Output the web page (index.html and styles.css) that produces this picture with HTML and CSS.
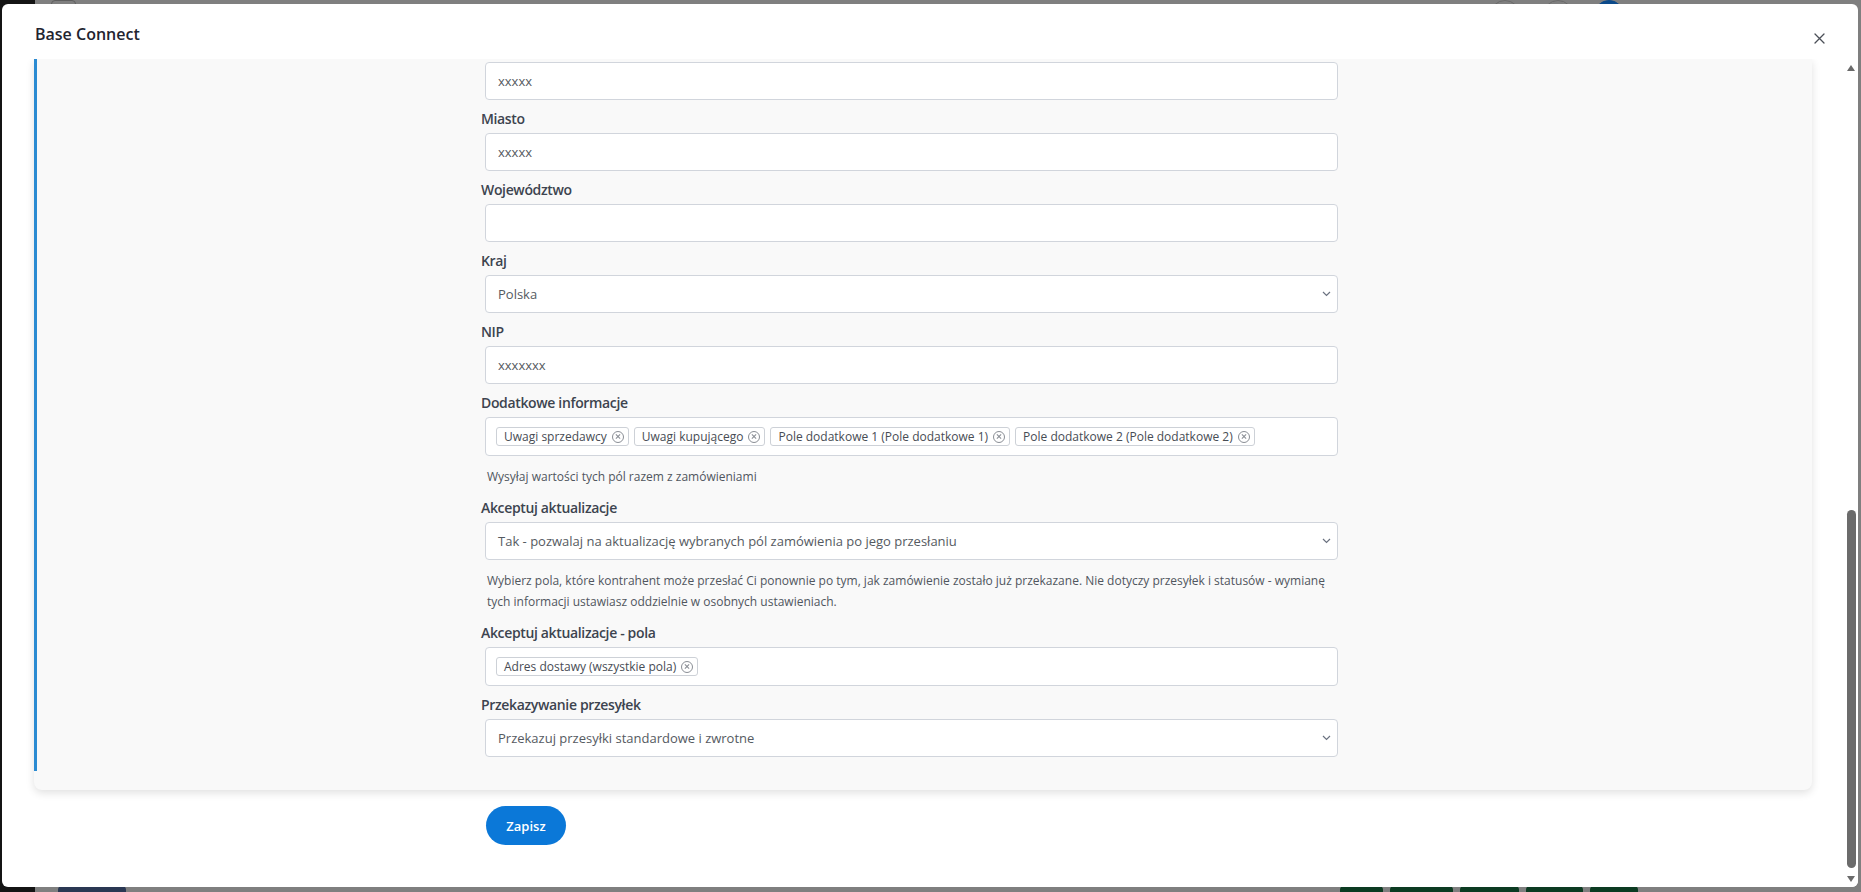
FILE: index.html
```html
<!DOCTYPE html>
<html lang="pl">
<head>
    <meta charset="UTF-8">
    <meta name="viewport" content="width=device-width, initial-scale=1.0">
    <title>Base Connect</title>
    <link rel="stylesheet" href="styles.css">
</head>
<body>
    <!-- STRONA POD NAKŁADKĄ -->
    <div class="pod-spodem">
        <div class="pasek-boczny"></div>
        <span class="ikona-kwadrat"></span>
        <span class="kolko kolko-1"></span>
        <span class="kolko kolko-2"></span>
        <span class="kolko kolko-3"></span>
        <span class="klocek klocek-granat"></span>
        <span class="klocek klocek-zielony z1"></span>
        <span class="klocek klocek-zielony z2"></span>
        <span class="klocek klocek-zielony z3"></span>
        <span class="klocek klocek-zielony z4"></span>
        <span class="klocek klocek-zielony z5"></span>
    </div>

    <!-- OKNO MODALNE -->
    <div class="modal">
        <div class="modal-naglowek">
            <h1>Base Connect</h1>
            <button class="zamknij" aria-label="Zamknij">
                <svg width="11" height="11" viewBox="0 0 11 11">
                    <path d="M1 1L10 10M10 1L1 10" stroke="#4b4f57" stroke-width="1.3" stroke-linecap="round"/>
                </svg>
            </button>
        </div>

        <div class="modal-cialo">
            <div class="tresc">
                <div class="panel">
                    <div class="sekcja">
                        <div class="formularz">
                            <div class="pole">
                                <input class="kontrolka" type="text" value="xxxxx">
                            </div>

                            <div class="pole">
                                <label>Miasto</label>
                                <input class="kontrolka" type="text" value="xxxxx">
                            </div>

                            <div class="pole">
                                <label>Województwo</label>
                                <input class="kontrolka" type="text" value="">
                            </div>

                            <div class="pole">
                                <label>Kraj</label>
                                <div class="wybor">
                                    <div class="kontrolka">Polska</div>
                                    <svg class="strzalka" width="9" height="6" viewBox="0 0 9 6"><path d="M1 1l3.5 3.5L8 1" fill="none" stroke="#6b7280" stroke-width="1.2"/></svg>
                                </div>
                            </div>

                            <div class="pole">
                                <label>NIP</label>
                                <input class="kontrolka" type="text" value="xxxxxxx">
                            </div>

                            <div class="pole z-pomoca">
                                <label>Dodatkowe informacje</label>
                                <div class="kontrolka multi">
                                    <span class="tag">Uwagi sprzedawcy<i class="usun"></i></span>
                                    <span class="tag">Uwagi kupującego<i class="usun"></i></span>
                                    <span class="tag">Pole dodatkowe 1 (Pole dodatkowe 1)<i class="usun"></i></span>
                                    <span class="tag">Pole dodatkowe 2 (Pole dodatkowe 2)<i class="usun"></i></span>
                                </div>
                                <p class="pomoc">Wysyłaj wartości tych pól razem z zamówieniami</p>
                            </div>

                            <div class="pole z-pomoca">
                                <label>Akceptuj aktualizacje</label>
                                <div class="wybor">
                                    <div class="kontrolka">Tak - pozwalaj na aktualizację wybranych pól zamówienia po jego przesłaniu</div>
                                    <svg class="strzalka" width="9" height="6" viewBox="0 0 9 6"><path d="M1 1l3.5 3.5L8 1" fill="none" stroke="#6b7280" stroke-width="1.2"/></svg>
                                </div>
                                <p class="pomoc">Wybierz pola, które kontrahent może przesłać Ci ponownie po tym, jak zamówienie zostało już przekazane. Nie dotyczy przesyłek i statusów - wymianę tych informacji ustawiasz oddzielnie w osobnych ustawieniach.</p>
                            </div>

                            <div class="pole">
                                <label>Akceptuj aktualizacje - pola</label>
                                <div class="kontrolka multi">
                                    <span class="tag">Adres dostawy (wszystkie pola)<i class="usun"></i></span>
                                </div>
                            </div>

                            <div class="pole">
                                <label>Przekazywanie przesyłek</label>
                                <div class="wybor">
                                    <div class="kontrolka">Przekazuj przesyłki standardowe i zwrotne</div>
                                    <svg class="strzalka" width="9" height="6" viewBox="0 0 9 6"><path d="M1 1l3.5 3.5L8 1" fill="none" stroke="#6b7280" stroke-width="1.2"/></svg>
                                </div>
                            </div>
                        </div>
                    </div>
                </div>

                <div class="akcje">
                    <button class="btn-zapisz">Zapisz</button>
                </div>
            </div>

            <!-- pasek przewijania -->
            <div class="suwak">
                <div class="suwak-przycisk"><span class="trojkat-gora"></span></div>
                <div class="suwak-tor"><div class="suwak-uchwyt"></div></div>
                <div class="suwak-przycisk"><span class="trojkat-dol"></span></div>
            </div>
        </div>
    </div>
</body>
</html>
```

FILE: styles.css
```css
/* [1] OGÓLNE */
* {
    box-sizing: border-box;
}

body {
    margin: 0;
    height: 892px;
    padding: 4px 3px 0 2px;
    background-color: #7f7f7f;
    font-family: "Open Sans", "Liberation Sans", sans-serif;
    position: relative;
    overflow: hidden;
}

/* [2] STRONA POD NAKŁADKĄ */
.pod-spodem {
    position: absolute;
    inset: 0;
    z-index: 0;
}

.pasek-boczny {
    position: absolute;
    left: 0;
    top: 0;
    bottom: 0;
    width: 35px;
    background-color: #141414;
}

.ikona-kwadrat {
    position: absolute;
    left: 51px;
    top: 0;
    width: 25px;
    height: 20px;
    border: 1px solid #5e5e5e;
    border-radius: 4px;
}

.kolko {
    position: absolute;
    top: 0;
    width: 30px;
    height: 30px;
    border-radius: 50%;
    border: 1px solid #6a6a6a;
}

.kolko-1 { left: 1490px; }
.kolko-2 { left: 1543px; }
.kolko-3 { left: 1594px; background-color: #0c4a8a; border-color: #0c4a8a; }

.klocek {
    position: absolute;
    bottom: 0;
    height: 6px;
    border-radius: 4px 4px 0 0;
}

.klocek-granat { left: 58px; width: 68px; background-color: #2a3853; }
.klocek-zielony { background-color: #0c3b22; }
.z1 { left: 1340px; width: 43px; }
.z2 { left: 1390px; width: 63px; }
.z3 { left: 1460px; width: 59px; }
.z4 { left: 1526px; width: 57px; }
.z5 { left: 1590px; width: 48px; }

/* [3] OKNO MODALNE */
.modal {
    position: relative;
    z-index: 1;
    width: 1856px;
    height: 883px;
    background: white;
    border-radius: 6px;
    display: flex;
    flex-direction: column;
    overflow: hidden;
}

.modal-naglowek {
    height: 55px;
    flex-shrink: 0;
    padding: 19px 33px 0 33px;
    display: flex;
    justify-content: space-between;
    align-items: flex-start;
}

.modal-naglowek h1 {
    margin: 0;
    font-size: 16px;
    font-weight: 600;
    line-height: 22px;
    color: #1f2430;
}

.zamknij {
    width: 11px;
    height: 11px;
    margin-top: 10px;
    padding: 0;
    border: none;
    background: none;
    cursor: pointer;
    display: flex;
}

.modal-cialo {
    flex: 1;
    display: flex;
    min-height: 0;
}

.tresc {
    flex: 1;
    padding: 0 32px;
    overflow: hidden;
}

/* [4] PANEL Z FORMULARZEM */
.panel {
    background-color: #f9f9f9;
    border-radius: 0 0 8px 8px;
    box-shadow: 0 3px 8px rgba(0,0,0,0.12);
    padding-bottom: 19px;
}

.sekcja {
    border-left: 3px solid #2b8bd2;
    padding: 3px 0 14px 444px;
}

.formularz {
    width: 857px;
}

.pole {
    margin-bottom: 9px;
}

.pole.z-pomoca {
    margin-bottom: 11px;
}

.pole:last-child {
    margin-bottom: 0;
}

.pole label {
    display: block;
    font-size: 14px;
    line-height: 20px;
    font-weight: 600;
    letter-spacing: -0.35px;
    color: #3d444f;
    margin-bottom: 4px;
}

.kontrolka {
    display: block;
    margin-left: 4px;
    width: 853px;
    height: 38px;
    padding: 0 12px;
    border: 1px solid #d1d5dc;
    border-radius: 4px;
    background: white;
    font-family: inherit;
    font-size: 13px;
    line-height: 36px;
    color: #555a61;
    outline: none;
}

.wybor {
    position: relative;
}

.strzalka {
    position: absolute;
    right: 7px;
    top: 50%;
    margin-top: -3px;
}

/* pole z tagami */
.multi {
    height: 39px;
    padding: 9px 10px 0 10px;
    display: flex;
    align-items: flex-start;
    gap: 5px;
}

.tag {
    height: 19px;
    display: inline-flex;
    align-items: center;
    gap: 5px;
    padding: 0 4px 0 7px;
    border: 1px solid #cdd1d7;
    border-radius: 3px;
    background: white;
    font-size: 12px;
    line-height: 17px;
    color: #474c54;
    white-space: nowrap;
}

.usun {
    position: relative;
    width: 12px;
    height: 12px;
    border: 1px solid #8a8e95;
    border-radius: 50%;
}

.usun::before,
.usun::after {
    content: "";
    position: absolute;
    left: 2px;
    top: 4.5px;
    width: 6px;
    height: 1px;
    background-color: #8a8e95;
    transform: rotate(45deg);
}

.usun::after {
    transform: rotate(-45deg);
}

.pomoc {
    margin: 10px 0 0 0;
    padding-left: 6px;
    font-size: 12px;
    line-height: 21px;
    color: #50565e;
}

/* [5] PRZYCISK ZAPISZ */
.akcje {
    padding: 16px 0 0 452px;
}

.btn-zapisz {
    width: 80px;
    height: 39px;
    border: none;
    border-radius: 20px;
    background-color: #0b78d8;
    color: white;
    font-family: inherit;
    font-size: 13px;
    font-weight: 600;
    cursor: pointer;
}

/* [6] PASEK PRZEWIJANIA */
.suwak {
    width: 14px;
    flex-shrink: 0;
    display: flex;
    flex-direction: column;
    background: white;
}

.suwak-przycisk {
    height: 17px;
    display: flex;
    align-items: center;
    justify-content: center;
}

.trojkat-gora {
    border-left: 4.5px solid transparent;
    border-right: 4.5px solid transparent;
    border-bottom: 6px solid #6a6a6a;
}

.trojkat-dol {
    border-left: 4.5px solid transparent;
    border-right: 4.5px solid transparent;
    border-top: 6px solid #6a6a6a;
}

.suwak-tor {
    flex: 1;
    padding-top: 434px;
}

.suwak-uchwyt {
    width: 9px;
    height: 358px;
    margin-left: 3px;
    border-radius: 5px;
    background-color: #6b6b6b;
}
```
